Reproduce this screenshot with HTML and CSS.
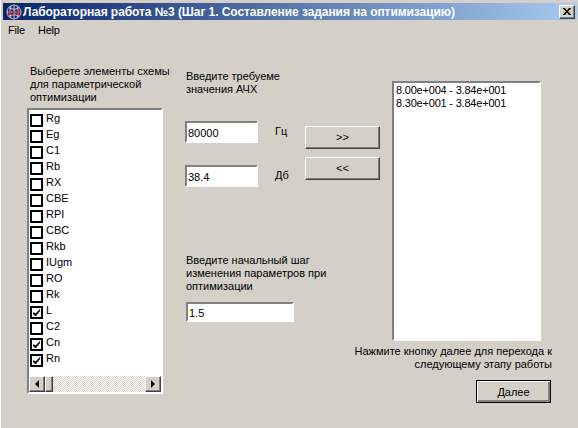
FILE: index.html
```html
<!DOCTYPE html>
<html lang="ru">
<head>
    <meta charset="UTF-8">
    <title>Лабораторная работа №3</title>
    <link rel="stylesheet" href="styles.css">
</head>
<body>

<div class="window">
    <div class="titlebar">
        <svg class="app-icon" width="16" height="16" viewBox="0 0 16 16">
            <circle cx="8" cy="8" r="7" fill="#1a2a60" stroke="#b8c4d8" stroke-width="1"/>
            <path d="M8 1V15M1 8H15M3 4Q8 7 13 4M3 12Q8 9 13 12M5 2Q2 8 5 14M11 2Q14 8 11 14" fill="none" stroke="#c0cce0" stroke-width="1"/>
            <path d="M2 8H5M2 10H5M3 7V11M6 8H9M7 7V11M10 8H14M11 7V11M13 7V11" fill="none" stroke="#f01010" stroke-width="1"/>
        </svg>
        <span class="title-text">Лабораторная работа №3 (Шаг 1. Составление задания на оптимизацию)</span>
        <button class="close-btn">
            <svg width="8" height="7" viewBox="0 0 8 7"><path d="M0 0H2L4 2.500L6 0H8V.5L5 3.500L8 6.500V7H6L4 4.500L2 7H0V6.500L3 3.500L0 .5Z" fill="#000"/></svg>
        </button>
    </div>

    <div class="menubar">
        <span class="menu-item">File</span>
        <span class="menu-item">Help</span>
    </div>

    <div class="content">
        <div class="col-left">
            <p class="caption">Выберете элементы схемы для параметрической оптимизации</p>
            <div class="checklist sunken">
                <div class="check-rows" id="checkRows"></div>
                <div class="hscroll">
                    <span class="scroll-btn"><i class="arrow-left"></i></span>
                    <span class="scroll-thumb"></span>
                    <span class="scroll-track"></span>
                    <span class="scroll-btn"><i class="arrow-right"></i></span>
                </div>
            </div>
        </div>

        <div class="col-mid">
            <p class="caption mid-caption">Введите требуеме значения АЧХ</p>
            <div class="value-block">
                <div class="value-inputs">
                    <div class="value-row">
                        <input class="field sunken" value="80000">
                        <span class="unit">Гц</span>
                    </div>
                    <div class="value-row">
                        <input class="field sunken" value="38.4">
                        <span class="unit">Дб</span>
                    </div>
                </div>
                <div class="value-buttons">
                    <button class="btn btn-arrows">&gt;&gt;</button>
                    <button class="btn btn-arrows">&lt;&lt;</button>
                </div>
            </div>
            <p class="caption step-caption">Введите начальный шаг изменения параметров при оптимизации</p>
            <input class="field field-wide sunken" value="1.5">
        </div>

        <div class="col-right">
            <div class="listbox sunken">
                <div>8.00e+004 - 3.84e+001</div>
                <div>8.30e+001 - 3.84e+001</div>
            </div>
            <p class="hint">Нажмите кнопку далее для перехода к следующему этапу работы</p>
            <button class="btn btn-default">Далее</button>
        </div>
    </div>
</div>

<script>
    const elements = ['Rg', 'Eg', 'C1', 'Rb', 'RX', 'CBE', 'RPI', 'CBC', 'Rkb', 'IUgm', 'RO', 'Rk', 'L', 'C2', 'Cn', 'Rn'];
    const checked = ['L', 'Cn', 'Rn'];

    const rows = document.getElementById('checkRows');
    elements.forEach(name => {
        let row = document.createElement('div');
        row.classList.add('check-row');
        let mark = checked.includes(name)
            ? '<svg width="7" height="7" viewBox="0 0 7 7"><path d="M0 3V5L2 7H3L7 2V0L2.500 4.500Z" fill="#000"/></svg>'
            : '';
        row.innerHTML = `<span class="check-box">${mark}</span><span class="check-label">${name}</span>`;
        rows.appendChild(row);
    });
</script>

</body>
</html>
```

FILE: styles.css
```css
* {
    box-sizing: border-box;
}
body {
    margin: 0;
    font-family: "Liberation Sans", Arial, sans-serif;
    font-size: 11px;
    color: #000;
    background-color: #d4d0c8;
}
.window {
    width: 578px;
    height: 428px;
    padding: 3px 0 0 2px;
    background-color: #d4d0c8;
    border-left: 1px solid #fff;
    overflow: hidden;
}
.titlebar {
    display: flex;
    align-items: center;
    height: 17px;
    margin-right: 1px;
    padding: 0 2px 0 3px;
    background: linear-gradient(to right, #0a246a, #a6caf0);
    color: #fff;
}
.app-icon {
    flex: none;
    margin-right: 1px;
}
.title-text {
    flex: 1;
    font-size: 12px;
    font-weight: bold;
    letter-spacing: -0.07px;
    white-space: nowrap;
}
.close-btn {
    display: flex;
    align-items: center;
    justify-content: center;
    width: 16px;
    height: 14px;
    padding: 0;
    background-color: #d4d0c8;
    border: 1px solid;
    border-color: #fff #404040 #404040 #fff;
    box-shadow: inset -1px -1px 0 #808080;
}
.menubar {
    display: flex;
    gap: 13px;
    height: 20px;
    padding: 4px 0 0 5px;
}
.menu-item {
    letter-spacing: -0.2px;
}
.content {
    display: flex;
    padding: 20px 0 0 24px;
}
.caption, .hint {
    margin: 0;
    line-height: 13px;
}
.sunken {
    border: 2px solid;
    border-color: #808080 #fff #fff #808080;
    background-color: #fff;
}
.col-left {
    width: 158px;
    padding-top: 5px;
}
.col-left .caption {
    width: 148px;
    height: 43px;
    padding: 0 0 0 3px;
}
.checklist {
    width: 136px;
    height: 286px;
    display: flex;
    flex-direction: column;
    justify-content: space-between;
}
.check-rows {
    padding: 2px 0 0 1px;
}
.check-row {
    display: flex;
    align-items: center;
    gap: 3px;
    height: 16px;
}
.check-box {
    display: flex;
    align-items: center;
    justify-content: center;
    width: 13px;
    height: 13px;
    border: 2px solid #000;
    background-color: #fff;
}
.check-label {
    margin-top: -5px;
}
.hscroll {
    display: flex;
    height: 16px;
}
.scroll-btn, .scroll-thumb {
    display: flex;
    align-items: center;
    justify-content: center;
    width: 16px;
    height: 16px;
    background-color: #d4d0c8;
    border: 1px solid;
    border-color: #fff #404040 #404040 #fff;
    box-shadow: inset -1px -1px 0 #808080;
}
.scroll-thumb {
    width: 8px;
}
.scroll-track {
    flex: 1;
    background-color: #eae8e3;
    background-image: repeating-conic-gradient(#d4d0c8 0 25%, #fff 0 50%);
    background-size: 2px 2px;
}
.arrow-left, .arrow-right {
    width: 0;
    height: 0;
    border-top: 4px solid transparent;
    border-bottom: 4px solid transparent;
}
.arrow-left {
    border-right: 4px solid #000;
}
.arrow-right {
    border-left: 4px solid #000;
}
.col-mid {
    width: 207px;
    padding-top: 10px;
}
.mid-caption {
    width: 110px;
    padding-left: 1px;
}
.value-block {
    display: flex;
    margin-top: 25px;
}
.value-inputs {
    display: flex;
    flex-direction: column;
    gap: 22px;
    width: 120px;
}
.value-row {
    display: flex;
    align-items: center;
    gap: 17px;
}
.unit {
    margin-top: -2px;
}
.field {
    width: 73px;
    height: 22px;
    padding: 1px 0 0 1px;
    font-family: inherit;
    font-size: 11px;
    color: #000;
    outline: none;
}
.value-buttons {
    display: flex;
    flex-direction: column;
    gap: 8px;
    padding-top: 5px;
}
.btn {
    width: 75px;
    height: 23px;
    padding: 0;
    font-family: inherit;
    font-size: 11px;
    color: #000;
    background-color: #d4d0c8;
    border: 1px solid;
    border-color: #fff #404040 #404040 #fff;
    box-shadow: inset -1px -1px 0 #808080;
}
.btn-arrows {
    padding-bottom: 2px;
}
.step-caption {
    margin-top: 67px;
    padding-left: 1px;
    width: 165px;
}
.field-wide {
    display: block;
    width: 108px;
    height: 20px;
    margin: 9px 0 0 1px;
}
.col-right {
    width: 160px;
    display: flex;
    flex-direction: column;
    align-items: flex-end;
    margin-top: 21px;
    padding-right: 1px;
}
.listbox {
    align-self: flex-start;
    width: 149px;
    height: 260px;
    padding: 1px 2px;
    line-height: 13px;
    letter-spacing: -0.2px;
}
.hint {
    align-self: stretch;
    margin: 4px -1px 0 -40px;
    text-align: right;
}
.btn-default {
    margin-top: 9px;
    border: 1px solid #000;
    box-shadow: inset 1px 1px 0 #fff, inset -2px -2px 0 #808080;
}
```
